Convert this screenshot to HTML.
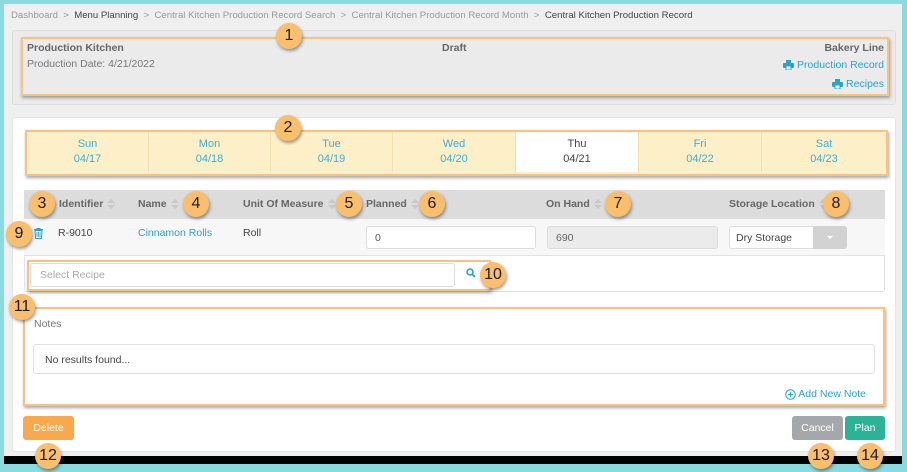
<!DOCTYPE html>
<html><head><style>
*{box-sizing:border-box;margin:0;padding:0}
body{width:907px;height:472px;background:#8adbe0;font-family:"Liberation Sans",sans-serif;font-size:10.5px;color:#555;position:relative;overflow:hidden}
.a{position:absolute}
.main{left:4px;top:4px;width:898px;height:452px;background:#efefef}
.black{left:4px;top:456px;width:898px;height:8px;background:#000}
.ob{position:absolute;border:2px solid #f9c27d;box-shadow:1px 2px 3px rgba(0,0,0,.35)}
.b{position:absolute;width:26px;height:26px;border-radius:50%;background:#f9bf6d;color:#1a1a2e;font-size:16px;text-align:center;line-height:26px;box-shadow:1px 2px 3px rgba(0,0,0,.4)}
.link{color:#2aa3cc}
.day{position:absolute;top:0;height:40px;text-align:center;color:#3aaed6;font-size:11px;line-height:15px;padding-top:5px;border-right:1px solid #f3dfb0}
.sort{display:inline-block;width:8px;height:11px;vertical-align:middle;margin-left:4px;position:relative}
.sort:before{content:"";position:absolute;left:0;top:0;border:4px solid transparent;border-bottom:4px solid #c8c8c8;border-top:0}
.sort:after{content:"";position:absolute;left:0;top:6px;border:4px solid transparent;border-top:4px solid #c8c8c8;border-bottom:0}
.th{position:absolute;top:8px;font-weight:bold;color:#666;font-size:10.5px}
svg{vertical-align:middle}
</style></head><body>
<div class="a main"></div>
<div class="a black"></div>
<div class="a" style="left:11px;top:10px;font-size:9.6px;color:#999">Dashboard <span style="color:#888">&nbsp;&gt;&nbsp;</span> <span style="color:#444">Menu Planning</span> &nbsp;&gt;&nbsp; Central Kitchen Production Record Search &nbsp;&gt;&nbsp; Central Kitchen Production Record Month &nbsp;&gt;&nbsp; <span style="color:#444">Central Kitchen Production Record</span></div>
<div class="a" style="left:12px;top:30px;width:884px;height:75px;background:#ebebeb;border:1px solid #ddd;border-radius:3px"></div>
<div class="ob" style="left:21px;top:37px;width:868px;height:59px"></div>
<div class="a" style="left:27px;top:42px;font-weight:bold;color:#666">Production Kitchen</div>
<div class="a" style="left:27px;top:58px;color:#777">Production Date: 4/21/2022</div>
<div class="a" style="left:442px;top:42px;font-weight:bold;color:#666">Draft</div>
<div class="a" style="right:23px;top:42px;font-weight:bold;color:#666">Bakery Line</div>
<div class="a link" style="right:23px;top:59px"><svg width="11" height="10" viewBox="0 0 11 10"><rect x="3" y="0" width="5" height="3" fill="#2aa3cc"/><rect x="0" y="3" width="11" height="5" rx="1" fill="#2aa3cc"/><rect x="3" y="6" width="5" height="4" fill="#fff" stroke="#2aa3cc"/></svg> Production Record</div>
<div class="a link" style="right:23px;top:78px"><svg width="11" height="10" viewBox="0 0 11 10"><rect x="3" y="0" width="5" height="3" fill="#2aa3cc"/><rect x="0" y="3" width="11" height="5" rx="1" fill="#2aa3cc"/><rect x="3" y="6" width="5" height="4" fill="#fff" stroke="#2aa3cc"/></svg> Recipes</div>
<div class="b" style="left:276px;top:23px">1</div>
<div class="a" style="left:12px;top:117px;width:884px;height:335px;background:#fff;border-radius:3px;border:1px solid #e4e4e4"></div>
<div class="a" style="left:27px;top:132px;width:859px;height:42px;background:#fdf0c9">
<div class="day" style="left:0;width:122px">Sun<br>04/17</div>
<div class="day" style="left:122px;width:122px">Mon<br>04/18</div>
<div class="day" style="left:244px;width:122px">Tue<br>04/19</div>
<div class="day" style="left:366px;width:123px">Wed<br>04/20</div>
<div class="day" style="left:489px;width:123px;background:#fff;color:#444">Thu<br>04/21</div>
<div class="day" style="left:612px;width:123px">Fri<br>04/22</div>
<div class="day" style="left:735px;width:124px;border:0">Sat<br>04/23</div>
</div>
<div class="ob" style="left:25px;top:130px;width:863px;height:46px"></div>
<div class="b" style="left:275px;top:115px">2</div>
<div class="a" style="left:24px;top:190px;width:861px;height:102px;border:1px solid #e2e2e2;border-radius:3px"></div>
<div class="a" style="left:24px;top:190px;width:861px;height:29px;background:#dcdcdc">
<div class="th" style="left:35px">Identifier<span class="sort"></span></div>
<div class="th" style="left:114px">Name<span class="sort"></span></div>
<div class="th" style="left:219px">Unit Of Measure<span class="sort"></span></div>
<div class="th" style="left:342px">Planned<span class="sort"></span></div>
<div class="th" style="left:522px">On Hand<span class="sort"></span></div>
<div class="th" style="left:705px">Storage Location<span class="sort"></span></div>
</div>
<div class="a" style="left:24px;top:219px;width:861px;height:37px;background:#f7f7f7;border-bottom:1px solid #e2e2e2"></div>
<svg class="a" style="left:34px;top:228px" width="9" height="11" viewBox="0 0 9 11"><path d="M0 1.5h9M3 1.5V0.5h3v1M1 2.5h7l-0.6 8h-5.8z" fill="none" stroke="#2aa3cc" stroke-width="1"/><path d="M3 4v5M4.5 4v5M6 4v5" stroke="#2aa3cc" stroke-width="0.8"/></svg>
<div class="a" style="left:58px;top:227px;color:#444">R-9010</div>
<div class="a link" style="left:138px;top:227px">Cinnamon Rolls</div>
<div class="a" style="left:243px;top:227px;color:#444">Roll</div>
<div class="a" style="left:366px;top:226px;width:170px;height:23px;background:#fff;border:1px solid #ddd;border-radius:3px;padding:5px 8px;color:#555">0</div>
<div class="a" style="left:547px;top:226px;width:171px;height:23px;background:#ebebeb;border:1px solid #ddd;border-radius:3px;padding:5px 8px;color:#666">690</div>
<div class="a" style="left:729px;top:226px;width:118px;height:23px;background:#fff;border:1px solid #ddd;border-radius:3px;padding:5px 6px;color:#444">Dry Storage</div>
<div class="a" style="left:813px;top:226px;width:34px;height:23px;background:#d2d2d2;border-radius:0 3px 3px 0"></div>
<div class="a" style="left:827px;top:236px;border:3px solid transparent;border-top:3px solid #fff"></div>
<div class="a" style="left:30px;top:263px;width:425px;height:24px;background:#fff;border:1px solid #ddd;border-radius:3px;padding:5px 9px;color:#aaa">Select Recipe</div>
<svg class="a" style="left:466px;top:268px" width="10" height="10" viewBox="0 0 10 10"><circle cx="4" cy="4" r="3" fill="none" stroke="#2aa3cc" stroke-width="1.6"/><path d="M6 6l3 3" stroke="#2aa3cc" stroke-width="1.8"/></svg>
<div class="ob" style="left:27px;top:260px;width:464px;height:31px"></div>
<div class="b" style="left:480px;top:262px">10</div>
<div class="b" style="left:29px;top:191px">3</div>
<div class="b" style="left:183px;top:191px">4</div>
<div class="b" style="left:336px;top:191px">5</div>
<div class="b" style="left:419px;top:191px">6</div>
<div class="b" style="left:605px;top:191px">7</div>
<div class="b" style="left:823px;top:191px">8</div>
<div class="b" style="left:6px;top:221px">9</div>
<div class="ob" style="left:23px;top:307px;width:862px;height:99px"></div>
<div class="a" style="left:34px;top:318px;color:#777">Notes</div>
<div class="a" style="left:33px;top:344px;width:842px;height:30px;border:1px solid #e2e2e2;border-radius:3px;padding:9px 11px;color:#444">No results found...</div>
<div class="a link" style="right:41px;top:388px"><svg width="11" height="11" viewBox="0 0 11 11"><circle cx="5.5" cy="5.5" r="4.8" fill="none" stroke="#2aa3cc"/><path d="M5.5 3v5M3 5.5h5" stroke="#2aa3cc" stroke-width="1.2"/></svg> Add New Note</div>
<div class="b" style="left:9px;top:294px">11</div>
<div class="a" style="left:23px;top:416px;width:51px;height:24px;background:#f8a94c;border-radius:3px;color:#fff;text-align:center;line-height:24px">Delete</div>
<div class="a" style="left:792px;top:416px;width:51px;height:24px;background:#a5a8aa;border-radius:3px;color:#fff;text-align:center;line-height:24px">Cancel</div>
<div class="a" style="left:845px;top:416px;width:40px;height:24px;background:#2bb398;border-radius:3px;color:#fff;text-align:center;line-height:24px">Plan</div>
<div class="b" style="left:35px;top:443px">12</div>
<div class="b" style="left:808px;top:443px">13</div>
<div class="b" style="left:857px;top:443px">14</div>
</body></html>
